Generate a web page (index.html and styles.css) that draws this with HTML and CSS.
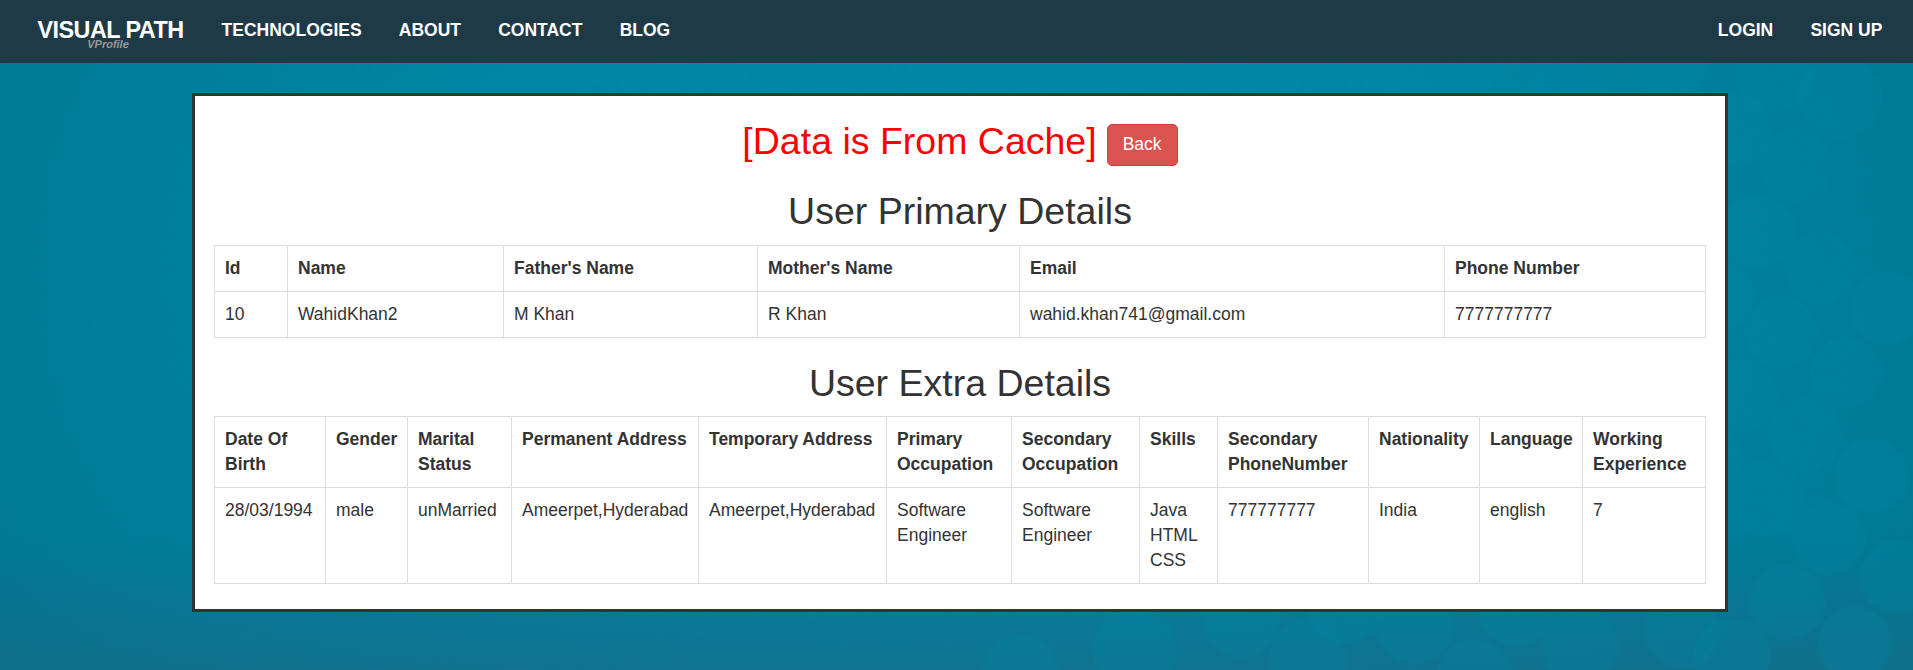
FILE: index.html
```html
<!DOCTYPE html>
<html lang="en">
<head>
<meta charset="utf-8">
<title>User Details</title>
<link rel="stylesheet" href="styles.css">
</head>
<body>
<svg class="backdrop" viewBox="0 0 1913 670" preserveAspectRatio="none" aria-hidden="true">
  <defs>
    <filter id="grain" x="0" y="0" width="100%" height="100%">
      <feTurbulence type="fractalNoise" baseFrequency="0.14" numOctaves="3" seed="4"/>
      <feColorMatrix values="0 0 0 0 0  0 0 0 0 0.2  0 0 0 0 0.25  0.5 0 0 0 -0.17"/>
    </filter>
    <filter id="soft"><feGaussianBlur stdDeviation="1"/></filter>
  </defs>
  <g class="bubbles" filter="url(#soft)">
    <circle cx="1775" cy="72" r="40"/><circle cx="1733" cy="130" r="37"/><circle cx="1840" cy="98" r="42"/>
    <circle cx="1796" cy="165" r="37"/><circle cx="1758" cy="231" r="37"/><circle cx="1821" cy="269" r="36"/>
    <circle cx="1718" cy="295" r="36"/><circle cx="1781" cy="332" r="36"/><circle cx="1886" cy="308" r="37"/>
    <circle cx="1846" cy="373" r="36"/><circle cx="1742" cy="396" r="36"/><circle cx="1805" cy="435" r="37"/>
    <circle cx="1705" cy="460" r="37"/><circle cx="1765" cy="499" r="38"/><circle cx="1871" cy="476" r="37"/>
    <circle cx="1829" cy="539" r="37"/><circle cx="1896" cy="577" r="37"/><circle cx="1787" cy="603" r="38"/>
    <circle cx="1855" cy="643" r="37"/><circle cx="1682" cy="631" r="38"/><circle cx="1732" cy="655" r="38"/>
    <circle cx="1580" cy="645" r="38"/><circle cx="1516" cy="609" r="38"/><circle cx="1475" cy="677" r="38"/>
    <circle cx="1415" cy="627" r="38"/><circle cx="1308" cy="659" r="38"/><circle cx="1345" cy="605" r="38"/>
    <circle cx="1242" cy="620" r="38"/><circle cx="1135" cy="650" r="42"/><circle cx="1020" cy="673" r="38"/>
    <circle cx="1670" cy="62" r="38"/><circle cx="1570" cy="80" r="38"/><circle cx="1460" cy="66" r="38"/>
  </g>
  <rect width="1913" height="670" filter="url(#grain)" opacity=".45"/>
</svg>

<nav class="navbar">
  <a class="brand" href="#"><span class="brand-name">VISUAL PATH</span><span class="brand-sub">VProfile</span></a>
  <ul class="menu">
    <li><a href="#">TECHNOLOGIES</a></li>
    <li><a href="#">ABOUT</a></li>
    <li><a href="#">CONTACT</a></li>
    <li><a href="#">BLOG</a></li>
  </ul>
  <ul class="menu menu-right">
    <li><a href="#">LOGIN</a></li>
    <li><a href="#">SIGN UP</a></li>
  </ul>
</nav>

<main class="panel">
  <div class="notice">
    <h2 class="title title-cache">[Data is From Cache]</h2>
    <a class="btn" href="#">Back</a>
  </div>

  <h2 class="title">User Primary Details</h2>
  <table class="table">
    <colgroup><col class="w73"><col class="w216"><col class="w254"><col class="w262"><col class="w425"><col class="w261"></colgroup>
    <tr><th>Id</th><th>Name</th><th>Father's Name</th><th>Mother's Name</th><th>Email</th><th>Phone Number</th></tr>
    <tr><td>10</td><td>WahidKhan2</td><td>M Khan</td><td>R Khan</td><td>wahid.khan741@gmail.com</td><td>7777777777</td></tr>
  </table>

  <h2 class="title title-extra">User Extra Details</h2>
  <table class="table">
    <colgroup><col class="w111"><col class="w82"><col class="w104"><col class="w187"><col class="w188"><col class="w125"><col class="w128"><col class="w78"><col class="w151"><col class="w111"><col class="w103"><col class="w123"></colgroup>
    <tr><th>Date Of Birth</th><th>Gender</th><th>Marital Status</th><th>Permanent Address</th><th>Temporary Address</th><th>Primary Occupation</th><th>Secondary Occupation</th><th>Skills</th><th>Secondary PhoneNumber</th><th>Nationality</th><th>Language</th><th>Working Experience</th></tr>
    <tr><td>28/03/1994</td><td>male</td><td>unMarried</td><td>Ameerpet,Hyderabad</td><td>Ameerpet,Hyderabad</td><td>Software Engineer</td><td>Software Engineer</td><td>Java HTML CSS</td><td>777777777</td><td>India</td><td>english</td><td>7</td></tr>
  </table>
</main>
</body>
</html>
```
FILE: styles.css
```css
* { box-sizing: border-box; }

body {
  margin: 0;
  height: 670px;
  overflow: hidden;
  font: 17.5px/25px "Liberation Sans", Arial, sans-serif;
  color: #333;
  background:
    linear-gradient(to bottom, rgba(22, 109, 137, 0) 530px, rgba(22, 109, 137, .85) 690px),
    radial-gradient(ellipse 1150px 800px at 50% 40%, #0089a8 0%, #0087a5 45%, #007e9a 75%, #007690 100%);
}

.backdrop {
  position: absolute;
  inset: 0;
  z-index: -1;
  width: 100%;
  height: 100%;
}

.bubbles { fill: #0088a6; fill-opacity: .24; }

.navbar {
  display: flex;
  height: 63px;
  padding: 0 12px 0 37px;
  background: #1f3a47;
  font-weight: bold;
}

.navbar a { color: #fff; text-decoration: none; }

.brand {
  display: flex;
  flex-direction: column;
  align-items: center;
  width: 147px;
  margin-right: 19px;
  padding-top: 17px;
}

.brand-name {
  font-size: 23.4px;
  letter-spacing: -.55px;
  line-height: 26px;
  white-space: nowrap;
}

.navbar .brand-sub {
  margin: -5px 5px 0 0;
  color: #999;
  font-size: 11px;
  font-style: italic;
  line-height: 12px;
}

.menu {
  display: flex;
  margin: 0;
  padding: 0;
  list-style: none;
}

.menu a { display: block; padding: 18px 18.6px; }

.menu-right { margin-left: auto; }

.panel {
  width: 1536px;
  height: 519px;
  margin: 30px 0 0 192px;
  padding: 19px;
  border: 3px solid #333;
  background: #fff;
}

.notice {
  display: flex;
  justify-content: center;
  align-items: flex-start;
  gap: 10px;
  height: 65px;
}

.title {
  margin: 0;
  font-size: 37.5px;
  font-weight: normal;
  line-height: 41px;
  text-align: center;
}

.notice .title { margin-top: 6px; }

.title-cache { color: red; }

.panel > .title { margin: 11px 0 13px; }

.panel > .title-extra { margin: 25px 0 12px; }

.btn {
  width: 71px;
  height: 42px;
  margin-top: 9px;
  border: 1px solid #d43f3a;
  border-radius: 5px;
  background: #d9534f;
  color: #fff;
  line-height: 38px;
  text-align: center;
  text-decoration: none;
}

.table {
  width: 1492px;
  border-collapse: collapse;
  table-layout: fixed;
}

.table th,
.table td {
  padding: 10px;
  border: 1px solid #ddd;
  text-align: left;
  vertical-align: top;
}

.w73 { width: 73px; }
.w78 { width: 78px; }
.w82 { width: 82px; }
.w103 { width: 103px; }
.w104 { width: 104px; }
.w111 { width: 111px; }
.w123 { width: 123px; }
.w125 { width: 125px; }
.w128 { width: 128px; }
.w151 { width: 151px; }
.w187 { width: 187px; }
.w188 { width: 188px; }
.w216 { width: 216px; }
.w254 { width: 254px; }
.w261 { width: 261px; }
.w262 { width: 262px; }
.w425 { width: 425px; }
```
